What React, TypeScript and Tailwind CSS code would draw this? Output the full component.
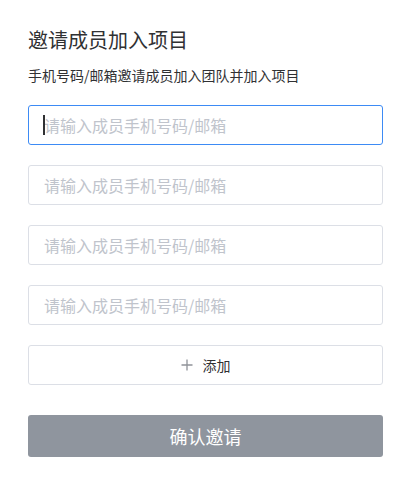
import React from "react";

const font = { fontFamily: '"Noto Sans CJK SC", "Noto Sans", sans-serif' };

function Field({ active }: { active?: boolean }) {
  return (
    <div
      className={`relative h-10 rounded-[3px] border bg-white ${
        active ? "border-[#3d8bf5]" : "border-[#dcdfe6]"
      }`}
    >
      {active && (
        <span className="absolute left-[14px] top-[9px] h-[20px] w-[2px] bg-[#303133]" />
      )}
      <input
        className="h-full w-full bg-transparent pl-[15px] pr-3 text-[16px] text-[#303133] outline-none placeholder:text-[#c0c4cc] caret-transparent"
        placeholder="请输入成员手机号码/邮箱"
        style={font}
      />
    </div>
  );
}

export default function App() {
  return (
    <div className="min-h-[481px] w-[412px] bg-white pl-[28px] pr-[29px] pt-[27px]" style={font}>
      <h1 className="text-[20px] leading-[26px] text-[#303133]">邀请成员加入项目</h1>
      <p className="mt-[12px] text-[14px] leading-[20px] text-[#303133]">
        手机号码/邮箱邀请成员加入团队并加入项目
      </p>
      <div className="mt-[20px] flex flex-col gap-5">
        <Field active />
        <Field />
        <Field />
        <Field />
        <button className="flex h-10 items-center justify-center gap-[10px] rounded-[3px] border border-[#dcdfe6] bg-white text-[14px] text-[#303133]">
          <svg width="12" height="12" viewBox="0 0 12 12" className="text-[#909399]">
            <path d="M6 0.5v11M0.5 6h11" stroke="currentColor" strokeWidth="1.3" />
          </svg>
          <span>添加</span>
        </button>
      </div>
      <button className="mt-[30px] flex h-[42px] w-full items-center justify-center rounded-[3px] bg-[#8f959e] text-[18px] text-white">
        确认邀请
      </button>
    </div>
  );
}
